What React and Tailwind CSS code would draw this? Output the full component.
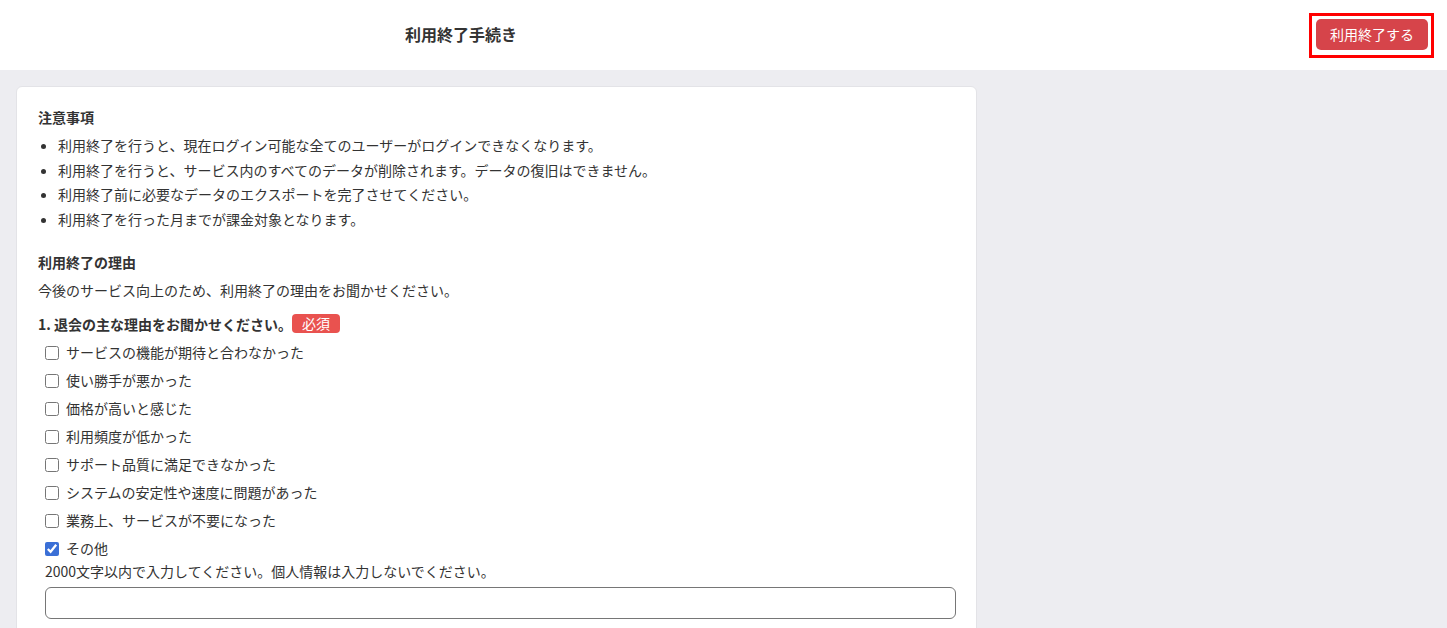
const notes = [
  "利用終了を行うと、現在ログイン可能な全てのユーザーがログインできなくなります。",
  "利用終了を行うと、サービス内のすべてのデータが削除されます。データの復旧はできません。",
  "利用終了前に必要なデータのエクスポートを完了させてください。",
  "利用終了を行った月までが課金対象となります。",
];

const reasons = [
  { label: "サービスの機能が期待と合わなかった", checked: false },
  { label: "使い勝手が悪かった", checked: false },
  { label: "価格が高いと感じた", checked: false },
  { label: "利用頻度が低かった", checked: false },
  { label: "サポート品質に満足できなかった", checked: false },
  { label: "システムの安定性や速度に問題があった", checked: false },
  { label: "業務上、サービスが不要になった", checked: false },
  { label: "その他", checked: true },
];

function Header() {
  return (
    <header className="h-[70px] bg-white flex items-center justify-between pr-[13px]">
      <div className="w-[922px] text-center text-[16px] font-bold text-[#333] -mt-[2px]">
        利用終了手続き
      </div>
      <div className="border-[3px] border-[#ff0000] pl-[4px] pr-[3px] pt-[3px] pb-[5px]">
        <button className="h-[31px] w-[112px] rounded-[5px] bg-[#d6444a] text-white text-[14px]">
          利用終了する
        </button>
      </div>
    </header>
  );
}

function App() {
  return (
    <div
      className="min-h-screen bg-[#ededf1] text-[#333] text-[14px]"
      style={{ fontFamily: '"Noto Sans CJK JP", "Noto Sans", sans-serif' }}
    >
      <Header />
      <main className="pt-[16px] pl-[16px]">
        <div className="w-[961px] bg-white rounded-[6px] border border-[#e3e3e7] px-[21px] pt-[20px] pb-[20px]">
          <h2 className="font-bold leading-[21px]">注意事項</h2>
          <ul className="mt-[5px] pl-[20px] list-disc">
            {notes.map((n, i) => (
              <li key={i} className="leading-[24.7px]">{n}</li>
            ))}
          </ul>

          <h2 className="mt-[20px] font-bold leading-[21px]">利用終了の理由</h2>
          <p className="mt-[5px] leading-[24px]">今後のサービス向上のため、利用終了の理由をお聞かせください。</p>

          <div className="mt-[11px] flex items-center leading-[22px]">
            <span className="font-bold">1. 退会の主な理由をお聞かせください。</span>
            <span className="bg-[#e9524f] text-white rounded-[4px] px-[10px] h-[19px] leading-[19px] text-[14px]">必須</span>
          </div>

          <div className="mt-[4px] pl-[7px]">
            {reasons.map((r, i) => (
              <label key={i} className="flex items-center gap-[7px] h-[28px]">
                <input
                  type="checkbox"
                  defaultChecked={r.checked}
                  className="w-[14px] h-[14px] m-0 accent-[#3a6fd6]"
                />
                <span>{r.label}</span>
              </label>
            ))}
          </div>

          <p className="pl-[7px] leading-[16px]">2000文字以内で入力してください。個人情報は入力しないでください。</p>
          <input
            type="text"
            className="mt-[8px] ml-[7px] w-[911px] h-[32px] rounded-[6px] border border-[#767676] px-2 outline-none"
          />
        </div>
      </main>
    </div>
  );
}

export default App;
